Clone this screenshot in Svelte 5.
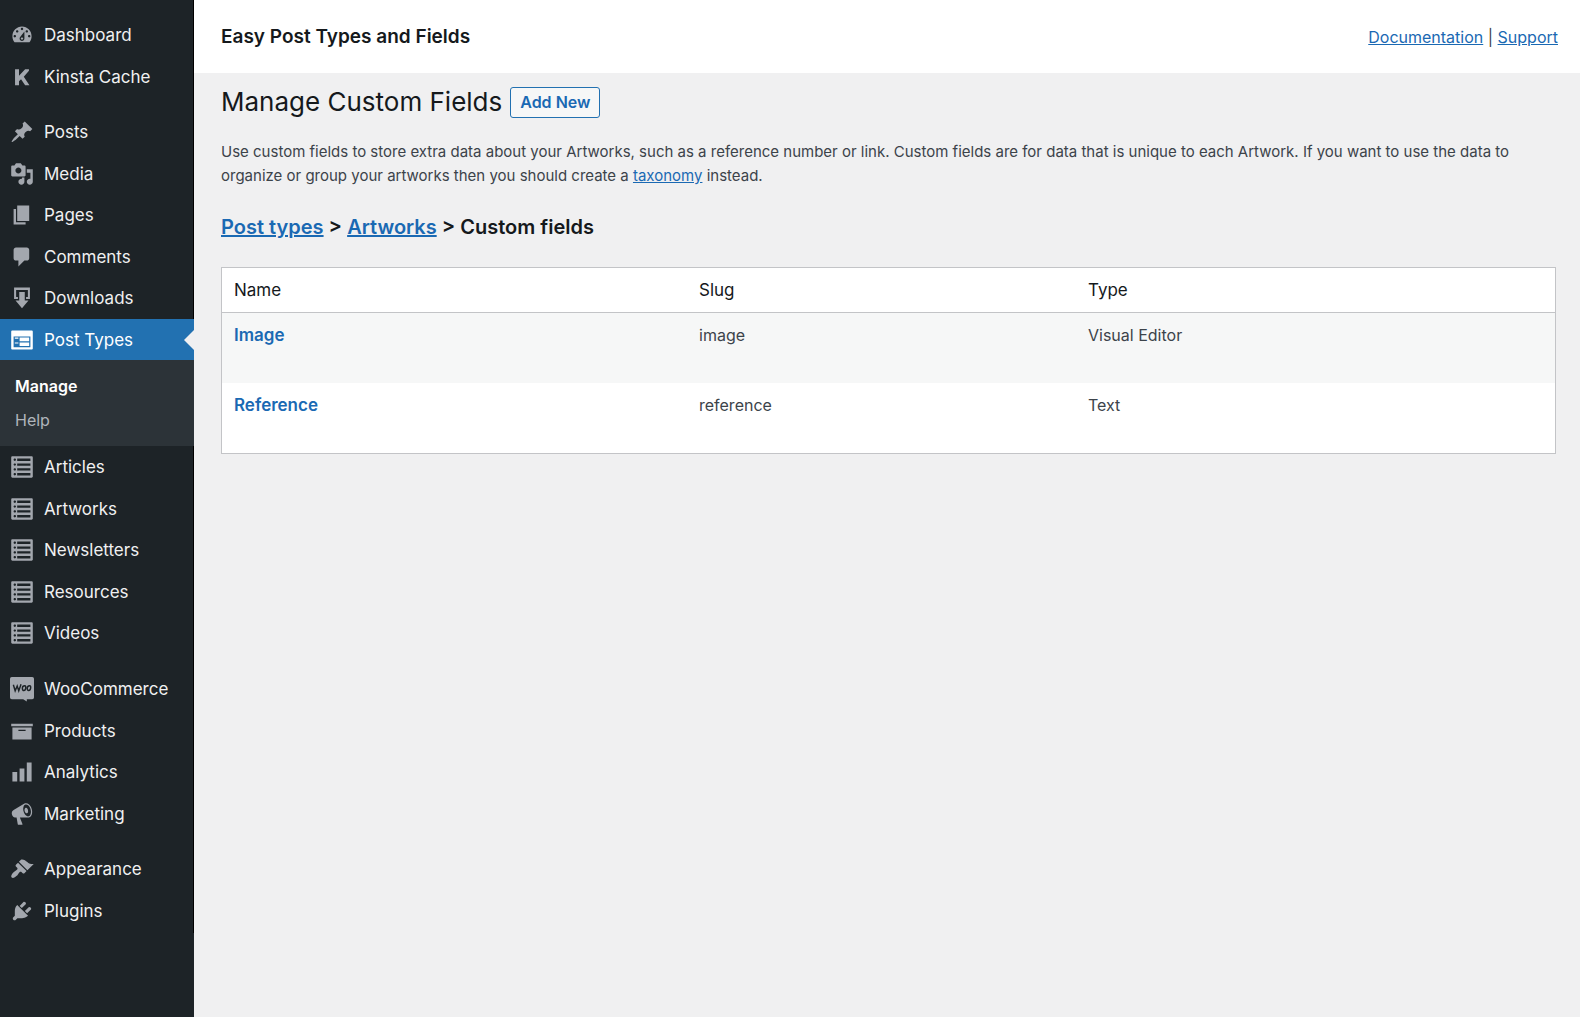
<script>
  const listIcon =
    'M2 19h16c.55 0 1-.45 1-1V2c0-.55-.45-1-1-1H2c-.55 0-1 .45-1 1v16c0 .55.45 1 1 1zM4 3c.55 0 1 .45 1 1s-.45 1-1 1-1-.45-1-1 .45-1 1-1zm13 0v2H6V3h11zM4 7c.55 0 1 .45 1 1s-.45 1-1 1-1-.45-1-1 .45-1 1-1zm13 0v2H6V7h11zM4 11c.55 0 1 .45 1 1s-.45 1-1 1-1-.45-1-1 .45-1 1-1zm13 0v2H6v-2h11zM4 15c.55 0 1 .45 1 1s-.45 1-1 1-1-.45-1-1 .45-1 1-1zm13 0v2H6v-2h11z';

  const groups = [
    {
      items: [
        { label: 'Dashboard', icon: 'M3.76 16h12.48c1.1-1.37 1.76-3.11 1.76-5 0-4.42-3.58-8-8-8s-8 3.58-8 8c0 1.89.66 3.63 1.76 5zM10 4c.55 0 1 .45 1 1s-.45 1-1 1-1-.45-1-1 .45-1 1-1zM6 6c.55 0 1 .45 1 1s-.45 1-1 1-1-.45-1-1 .45-1 1-1zm8 0c.55 0 1 .45 1 1s-.45 1-1 1-1-.45-1-1 .45-1 1-1zm-5.37 5.55L12 7v6c0 1.1-.9 2-2 2s-2-.9-2-2c0-.57.24-1.08.63-1.45zM4 10c.55 0 1 .45 1 1s-.45 1-1 1-1-.45-1-1 .45-1 1-1zm12 0c.55 0 1 .45 1 1s-.45 1-1 1-1-.45-1-1 .45-1 1-1zm-5 3c0-.55-.45-1-1-1s-1 .45-1 1 .45 1 1 1 1-.45 1-1z' },
        { label: 'Kinsta Cache', icon: 'M4.200 3.500H7.500V8.900L12.600 3.500H15.800V4.700L11.500 9.800L16.200 16.800H12.600L9.200 11.900L7.500 13.600V16.800H4.200z' }
      ]
    },
    {
      items: [
        { label: 'Posts', icon: 'M10.44 3.02l1.82-1.82 6.36 6.35-1.83 1.82c-1.05-.68-2.48-.57-3.41.36l-.75.75c-.92.93-1.04 2.35-.35 3.41l-1.83 1.82-2.41-2.41-2.8 2.79c-.42.42-3.38 2.71-3.8 2.29s1.86-3.39 2.28-3.81l2.79-2.79L4.1 9.36l1.83-1.82c1.05.69 2.48.57 3.4-.36l.75-.75c.93-.92 1.05-2.35.36-3.41z' },
        { label: 'Media', icon: 'M13 11V4c0-.55-.45-1-1-1h-1.67L9 1H5L3.67 3H2c-.55 0-1 .45-1 1v7c0 .55.45 1 1 1h10c.55 0 1-.45 1-1zM7 4.5c1.38 0 2.5 1.12 2.5 2.5S8.38 9.5 7 9.5 4.5 8.38 4.5 7 5.62 4.5 7 4.5zM14 6h5v10.5c0 1.38-1.12 2.5-2.5 2.5S14 17.88 14 16.5s1.12-2.5 2.5-2.5c.17 0 .34.02.5.05V9h-3V6zm-4 8.05V13h2v3.5c0 1.38-1.12 2.5-2.5 2.5S7 17.88 7 16.5 8.12 14 9.5 14c.17 0 .34.02.5.05z' },
        { label: 'Pages', icon: 'M6 15V2h10v13H6zm-1 1h8v2H3V5h2v11z' },
        { label: 'Comments', icon: 'M5 2h9c1.1 0 2 .9 2 2v7c0 1.1-.9 2-2 2h-2l-5 5v-5H5c-1.1 0-2-.9-2-2V4c0-1.1.9-2 2-2z' },
        { label: 'Downloads', icon: 'M3.400 1.200H16.600V10.800H13.400V9.200H14.900V3.300H5.100V9.200H6.600V10.800H3.400zM7.700 5H12.300V12H15.400L10 18.600L4.600 12H7.700z' },
        {
          label: 'Post Types',
          current: true,
          icon: 'M2 2h16c.55 0 1 .45 1 1v14c0 .55-.45 1-1 1H2c-.55 0-1-.45-1-1V3c0-.55.45-1 1-1zm15 14V7H3v9h14zM4 8v1h3V8H4zm4 0v3h8V8H8zm-4 4v1h3v-1H4zm4 0v3h8v-3H8z',
          children: [{ label: 'Manage', active: true }, { label: 'Help' }]
        }
      ]
    },
    {
      joined: true,
      items: ['Articles', 'Artworks', 'Newsletters', 'Resources', 'Videos'].map((label) => ({ label, icon: listIcon }))
    },
    {
      items: [
        { label: 'WooCommerce', woo: true, icon: 'M1.500 0h17q1.500 0 1.500 1.500v15.500q0 1.500-1.500 1.500h-4.500v2l-3-2H1.500q-1.500 0-1.500-1.500V1.500q0-1.500 1.500-1.500z' },
        { label: 'Products', icon: 'M19 4v2H1V4h18zM2 7h16v10H2V7zm11 3V9H7v1h6z' },
        { label: 'Analytics', icon: 'M18 18V2h-4v16h4zm-6 0V7H8v11h4zm-6 0v-8H2v8h4z' },
        { label: 'Marketing', icon: 'M18.15 5.94c.46 1.62.38 3.22-.02 4.48-.42 1.28-1.26 2.18-2.3 2.48-.16.06-.26.06-.4.06-.06.02-.12.02-.18.02-.06.02-.14.02-.22.02h-6.8l2.22 5.5c.02.14-.06.26-.14.34-.08.1-.24.16-.34.16H6.950c-.1 0-.26-.06-.34-.16-.08-.08-.16-.2-.14-.34l-1-5.500H4.250l-.02-.02c-.5.06-1.080-.18-1.540-.62s-.88-1.080-1.060-1.880c-.24-.8-.2-1.560-.02-2.200.18-.62.58-1.080 1.060-1.300l.02-.02 9-5.400c.1-.06.18-.1.24-.16.06-.04.14-.08.24-.12.16-.08.28-.12.5-.18 1.040-.3 2.240.1 3.220.98s1.840 2.240 2.260 3.860zm-2.580 5.980h-.02c.4-.1.74-.34 1.040-.7.58-.7.86-1.760.86-3.040 0-.64-.1-1.300-.28-1.980-.34-1.360-1.020-2.500-1.780-3.240s-1.680-1.100-2.460-.88c-.82.22-1.400.96-1.700 2-.32 1.040-.28 2.360.06 3.720.38 1.360 1 2.500 1.800 3.240.78.74 1.620 1.100 2.480.88zm-2.540-7.080c.22-.04.42-.02.62.04.38.16.76.48 1.020 1s.42 1.200.42 1.780c0 .3-.04.56-.12.8-.18.48-.44.84-.86.94-.34.1-.8-.06-1.140-.4s-.64-.86-.78-1.500c-.18-.62-.12-1.240.02-1.720s.48-.84.82-.94z' }
      ]
    },
    {
      items: [
        { label: 'Appearance', icon: 'M14.48 11.06L7.41 3.99l1.5-1.5c.5-.56 2.3-.47 3.51.32 1.21.8 1.43 1.28 2.91 2.1 1.18.64 2.45 1.26 4.45.85zm-.71.71L6.7 4.7 4.93 6.47c-.39.39-.39 1.02 0 1.41l1.06 1.06c.39.39.39 1.03 0 1.42-.6.6-1.43 1.11-2.21 1.69-.35.26-.7.53-1.01.84C1.43 14.23.4 16.08 1.4 17.07c.99 1 2.84-.03 4.18-1.36.31-.31.58-.66.85-1.02.57-.78 1.08-1.61 1.69-2.21.39-.39 1.02-.39 1.41 0l1.06 1.06c.39.39 1.02.39 1.41 0z' },
        { label: 'Plugins', icon: 'M13.11 4.36L9.87 7.6 8 5.73l3.24-3.24c.35-.34 1.05-.2 1.56.32.52.51.66 1.21.31 1.55zm-8 1.77l.91-1.12 9.01 9.01-1.19.84c-.71.71-2.63 1.16-3.82 1.16H6.14L4.9 17.26c-.59.59-1.54.59-2.12 0-.59-.58-.59-1.53 0-2.12l1.24-1.24v-3.88c0-1.13.4-3.19 1.09-3.89zm7.26 3.97l3.24-3.24c.34-.35 1.04-.21 1.55.31.52.51.66 1.21.31 1.55l-3.24 3.25z' }
      ]
    }
  ];

  const fields = [
    { name: 'Image', slug: 'image', type: 'Visual Editor' },
    { name: 'Reference', slug: 'reference', type: 'Text' }
  ];
</script>

<div class="admin">
  <nav class="sidebar" aria-label="Main menu">
    <div class="menu">
      {#each groups as group}
        <ul class="group" class:joined={group.joined}>
          {#each group.items as item}
            <li>
              <a class="item" class:current={item.current} href="#top">
                <svg class="icon" viewBox="0 0 20 20" aria-hidden="true">
                  <path fill-rule="evenodd" d={item.icon} />
                  {#if item.woo}
                    <path class="woo" d="M2.800 6.500L4.300 11.500L6 7.500L7.300 11.500L9.200 6M12.300 7.300q-2 0-2 2t1.300 2 1.500-2-.8-2zM16.300 7.300q-1.800 0-1.900 2t1.200 2 1.600-2-.9-2z" />
                  {/if}
                </svg>
                {item.label}
              </a>
              {#if item.children}
                <ul class="submenu">
                  {#each item.children as child}
                    <li><a class:active={child.active} href="#top">{child.label}</a></li>
                  {/each}
                </ul>
              {/if}
            </li>
          {/each}
        </ul>
      {/each}
    </div>
  </nav>

  <div class="page">
    <header>
      <strong>Easy Post Types and Fields</strong>
      <div class="help"><a href="#top">Documentation</a> | <a href="#top">Support</a></div>
    </header>

    <main>
      <div class="title">
        <h1>Manage Custom Fields</h1>
        <button type="button">Add New</button>
      </div>

      <p>
        Use custom fields to store extra data about your Artworks, such as a reference number or link. Custom fields
        are for data that is unique to each Artwork. If you want to use the data to organize or group your artworks
        then you should create a <a href="#top">taxonomy</a> instead.
      </p>

      <h2><a href="#top">Post types</a> &gt; <a href="#top">Artworks</a> &gt; Custom fields</h2>

      <table>
        <thead>
          <tr>
            <th class="name" scope="col">Name</th>
            <th class="slug" scope="col">Slug</th>
            <th scope="col">Type</th>
          </tr>
        </thead>
        <tbody>
          {#each fields as field}
            <tr>
              <td><a href="#top">{field.name}</a></td>
              <td>{field.slug}</td>
              <td>{field.type}</td>
            </tr>
          {/each}
        </tbody>
      </table>
    </main>
  </div>
</div>

<style>
  :global(body) {
    background: #f0f0f1;
  }

  .admin {
    display: flex;
    min-height: 100vh;
    font-family: Inter, 'Liberation Sans', sans-serif;
    font-size: 16px;
    line-height: 24px;
    color: #3c434a;
  }

  a {
    color: #1a69b3;
  }

  .sidebar {
    flex: none;
    width: 194px;
    background: #1d2327;
  }

  .menu {
    padding: 14px 0 2px;
    box-shadow: inset -1px 0 #000;
  }

  ul {
    margin: 0;
    padding: 0;
    list-style: none;
  }

  .group + .group:not(.joined) {
    margin-top: 14px;
  }

  .item {
    position: relative;
    display: flex;
    align-items: center;
    gap: 10px;
    height: 42px;
    padding-left: 10px;
    font-size: 17px;
    color: #f0f0f1;
    text-decoration: none;
  }

  .group > li:nth-child(even) > .item {
    height: 41px;
  }

  .icon {
    flex: none;
    width: 24px;
    height: 24px;
    fill: #a3a7ae;
    overflow: visible;
  }

  .woo {
    fill: none;
    stroke: #1d2327;
    stroke-width: 1.2;
  }

  .current {
    background: #2271b1;
    color: #fff;
  }

  .current .icon {
    fill: #fff;
  }

  .current::after {
    content: '';
    position: absolute;
    right: 0;
    top: calc(50% - 10px);
    border: 10px solid transparent;
    border-left-width: 0;
    border-right-color: #f0f0f1;
  }

  .submenu {
    padding: 9px 0;
    background: #2c3338;
  }

  .submenu a {
    display: block;
    padding: 5px 15px;
    color: #b0b5bb;
    text-decoration: none;
  }

  .submenu a.active {
    font-weight: 600;
    color: #fff;
  }

  .page {
    flex: 1;
    min-width: 0;
  }

  header {
    display: flex;
    align-items: center;
    justify-content: space-between;
    height: 73px;
    padding: 0 22px 0 27px;
    background: #fff;
  }

  header strong {
    font-size: 19px;
    font-weight: 600;
    color: #15191c;
  }

  main {
    padding: 12px 24px 24px 27px;
  }

  .title {
    display: flex;
    align-items: center;
    gap: 8px;
  }

  h1 {
    margin: 0;
    font-size: 26px;
    line-height: 34px;
    font-weight: 400;
    color: #15191c;
  }

  button {
    height: 31px;
    padding: 0 9px;
    border: 1px solid #2271b1;
    border-radius: 3px;
    background: #f6f7f7;
    font: inherit;
    font-weight: 600;
    color: #1a69b3;
  }

  p {
    margin: 21px 0 25px;
    font-size: 15px;
  }

  h2 {
    margin: 0 0 26px;
    font-size: 20px;
    line-height: 28px;
    font-weight: 600;
    color: #15191c;
  }

  table {
    width: 100%;
    table-layout: fixed;
    border: 1px solid #c3c4c7;
    border-spacing: 0;
    background: #fff;
  }

  th,
  td {
    padding: 10px 12px;
    text-align: left;
    vertical-align: top;
  }

  th {
    border-bottom: 1px solid #c3c4c7;
    font-size: 17px;
    font-weight: 400;
    color: #15191c;
  }

  .name {
    width: 441px;
  }

  .slug {
    width: 365px;
  }

  td {
    height: 50px;
  }

  td a {
    font-size: 17px;
    font-weight: 600;
    text-decoration: none;
  }

  tbody tr:nth-child(odd) {
    background: #f6f7f7;
  }
</style>
